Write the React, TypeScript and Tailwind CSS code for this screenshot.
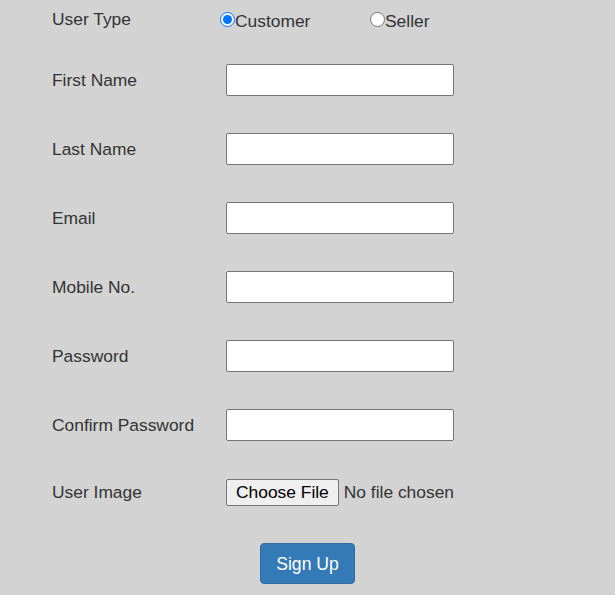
const fields = ['First Name', 'Last Name', 'Email', 'Mobile No.', 'Password', 'Confirm Password']

function Radio({ checked }: { checked: boolean }) {
  return (
    <span
      className={`inline-flex items-center justify-center w-[15px] h-[15px] rounded-full bg-white border ${
        checked ? 'border-[#0075ff]' : 'border-[#767676]'
      }`}
    >
      {checked && <span className="w-[9px] h-[9px] rounded-full bg-[#0075ff]" />}
    </span>
  )
}

export default function App() {
  return (
    <div
      className="w-[615px] h-[595px] bg-[#d3d3d3] text-[#333] text-[17.4px] overflow-hidden"
      style={{ fontFamily: '"Liberation Sans", Arial, sans-serif' }}
    >
      <div className="flex flex-col pl-[52px]">
        {/* user type */}
        <div className="flex items-center h-[40px]">
          <span className="w-[168px] -mt-[1px]">User Type</span>
          <label className="flex items-center w-[150px]">
            <Radio checked />
            <span className="mt-[2px]">Customer</span>
          </label>
          <label className="flex items-center">
            <Radio checked={false} />
            <span className="mt-[2px]">Seller</span>
          </label>
        </div>

        <div className="flex flex-col gap-[37px] mt-[24px]">
          {fields.map((f) => (
            <div key={f} className="flex items-center h-[32px]">
              <span className="w-[174px]">{f}</span>
              <input
                type={f.includes('Password') ? 'password' : 'text'}
                className="w-[228px] h-[32px] bg-white border border-[#767676] rounded-[2px] outline-none"
              />
            </div>
          ))}

          <div className="flex items-center h-[28px]">
            <span className="w-[174px]">User Image</span>
            <span className="flex items-center h-[27px] px-[9px] bg-[#efefef] border border-[#767676] rounded-[2px] text-black">
              Choose File
            </span>
            <span className="ml-[5px]">No file chosen</span>
          </div>
        </div>
      </div>

      <div className="flex justify-center mt-[37px]">
        <button className="w-[95px] h-[41px] pt-[1px] rounded-[4px] bg-[#337ab7] text-white text-[17.6px] border border-[#2e6da4]">
          Sign Up
        </button>
      </div>
    </div>
  )
}
